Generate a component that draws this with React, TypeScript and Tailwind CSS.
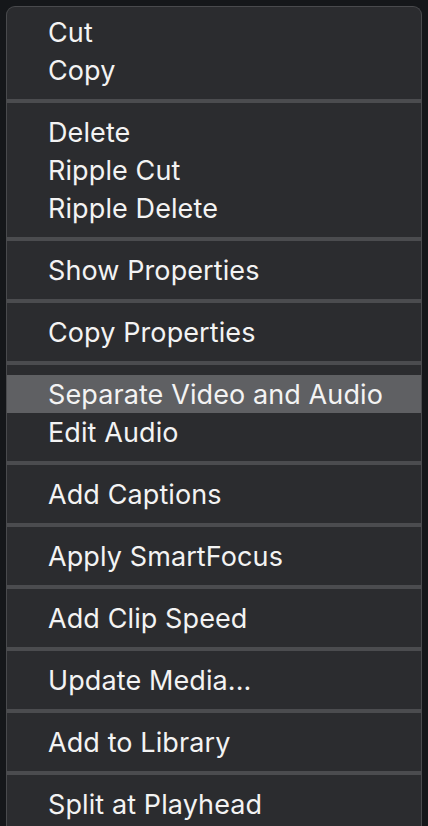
import React from 'react';

type Entry = { label: string; active?: boolean };

const groups: Entry[][] = [
  [{ label: 'Cut' }, { label: 'Copy' }],
  [{ label: 'Delete' }, { label: 'Ripple Cut' }, { label: 'Ripple Delete' }],
  [{ label: 'Show Properties' }],
  [{ label: 'Copy Properties' }],
  [{ label: 'Separate Video and Audio', active: true }, { label: 'Edit Audio' }],
  [{ label: 'Add Captions' }],
  [{ label: 'Apply SmartFocus' }],
  [{ label: 'Add Clip Speed' }],
  [{ label: 'Update Media...' }],
  [{ label: 'Add to Library' }],
  [{ label: 'Split at Playhead' }],
];

const MenuItem: React.FC<{ item: Entry }> = ({ item }) => (
  <div
    className={`h-[38px] flex items-center pl-[41px] pt-[2px] text-[27px] tracking-[0.1px] text-[#f3f3f3] ${
      item.active ? 'bg-[#5f6063]' : ''
    }`}
  >
    {item.label}
  </div>
);

const Separator: React.FC = () => (
  <div className="py-[10px]">
    <div className="h-[4px] bg-[#4b4c4f]" />
  </div>
);

export default function App() {
  return (
    <div
      className="w-[428px] h-[826px] overflow-hidden bg-[#15171a] pt-[6px] pl-[6px]"
      style={{ fontFamily: 'Inter, "Noto Sans", sans-serif' }}
    >
      <div className="w-[416px] h-[830px] rounded-t-[9px] border border-b-0 border-[#494a4d] bg-[#2b2c2f] pt-[6px]">
        {groups.map((group, gi) => (
          <React.Fragment key={gi}>
            {gi > 0 && <Separator />}
            {group.map((item) => (
              <MenuItem key={item.label} item={item} />
            ))}
          </React.Fragment>
        ))}
      </div>
    </div>
  );
}
